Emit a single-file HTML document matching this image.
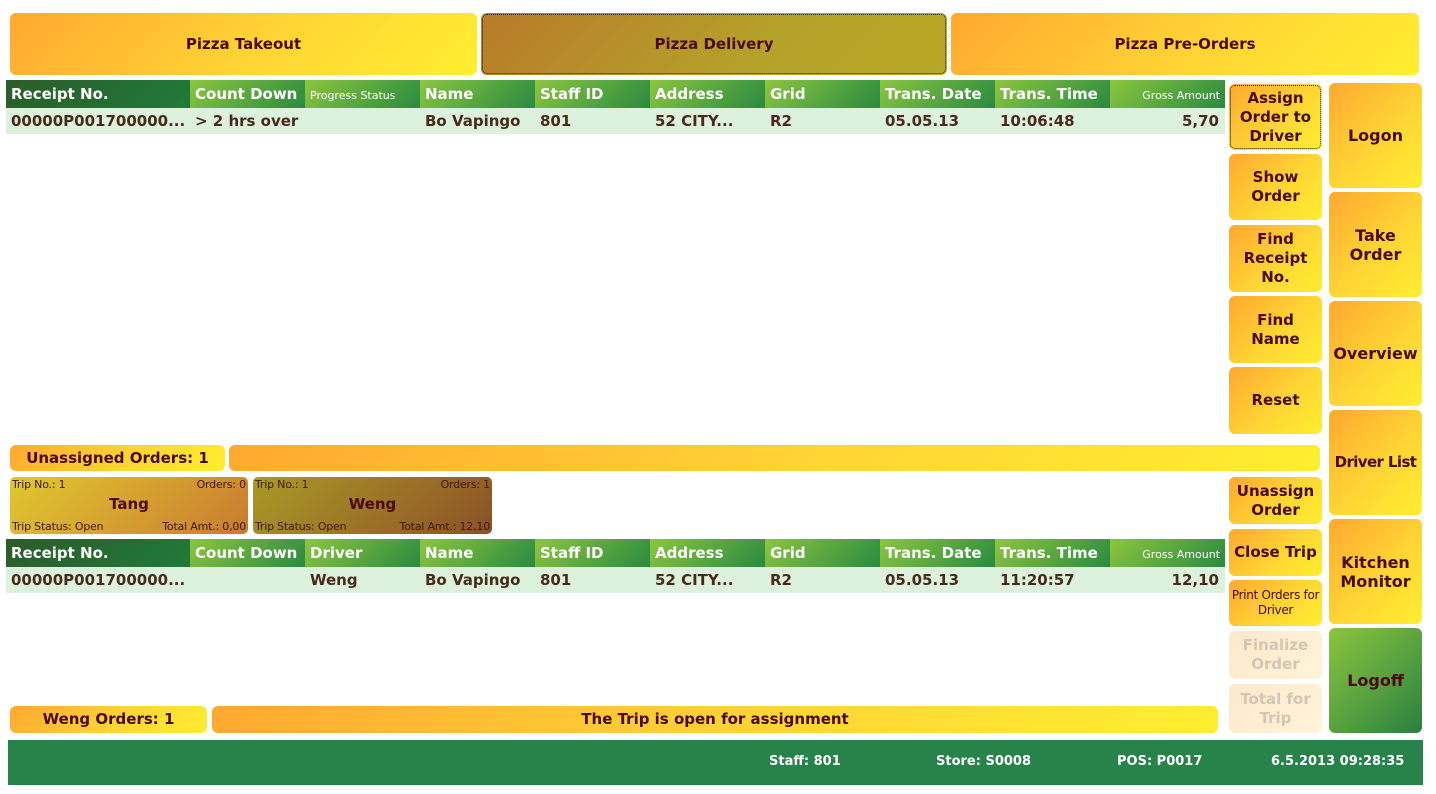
<!DOCTYPE html>
<html><head><meta charset="utf-8"><style>
*{margin:0;padding:0;box-sizing:border-box}
body{width:1436px;height:794px;background:#fff;position:relative;overflow:hidden;font-family:"DejaVu Sans","Liberation Sans",sans-serif;font-weight:bold;color:#4a0a00}
.a{position:absolute}
.o{position:absolute;border-radius:6px;background:linear-gradient(135deg,#ffa830,#ffd535 55%,#ffee30);display:flex;align-items:center;justify-content:center;text-align:center;font-size:15px;line-height:19px}
.dis{background:linear-gradient(135deg,#fde8cc,#fff4d8);color:#d4c6b4}
.h{position:absolute;height:28px;color:#fff;font-size:15px;line-height:28px;padding-left:5px;background:linear-gradient(135deg,#8cc63f,#2a8a40);white-space:nowrap;overflow:hidden}
.h.f{background:linear-gradient(135deg,#2d5c2a,#1f7a3a)}
.sm{font-weight:normal;font-size:11px}
.r{position:absolute;height:26px;background:#dcf2dc;font-size:15px;line-height:26px;color:#4a2a1a;white-space:nowrap}
.r span{position:absolute;top:0}
.card{position:absolute;border-radius:5px;font-size:11px;font-weight:normal;color:#3a1a00;letter-spacing:-0.2px}
.card div{position:absolute}
.ft{position:absolute;color:#fff;font-size:13px;top:754px}
</style></head><body>
<div class="o" style="left:10px;top:13px;width:467px;height:62px">Pizza Takeout</div>
<div class="o" style="left:481px;top:13px;width:466px;height:62px;background:linear-gradient(135deg,#b87a2a,#b5a22a 60%,#b8a825);outline:1px dotted #222;outline-offset:-2px">Pizza Delivery</div>
<div class="o" style="left:951px;top:13px;width:468px;height:62px">Pizza Pre-Orders</div>

<div class="h f" style="left:6px;top:80px;width:184px">Receipt No.</div>
<div class="h" style="left:190px;top:80px;width:115px">Count Down</div>
<div class="h" style="left:305px;top:80px;width:115px"><span class="sm">Progress Status</span></div>
<div class="h" style="left:420px;top:80px;width:115px">Name</div>
<div class="h" style="left:535px;top:80px;width:115px">Staff ID</div>
<div class="h" style="left:650px;top:80px;width:115px">Address</div>
<div class="h" style="left:765px;top:80px;width:115px">Grid</div>
<div class="h" style="left:880px;top:80px;width:115px">Trans. Date</div>
<div class="h" style="left:995px;top:80px;width:115px">Trans. Time</div>
<div class="h" style="left:1110px;top:80px;width:115px;text-align:right;padding-right:5px"><span class="sm">Gross Amount</span></div>
<div class="r" style="left:6px;top:108px;width:1219px">
<span style="left:5px">00000P001700000...</span><span style="left:189px">&gt; 2 hrs over</span><span style="left:419px">Bo Vapingo</span><span style="left:534px">801</span><span style="left:649px">52 CITY...</span><span style="left:764px">R2</span><span style="left:879px">05.05.13</span><span style="left:994px">10:06:48</span><span style="right:6px">5,70</span></div>

<div class="o" style="left:1229px;top:84px;width:93px;height:66px;outline:1px dotted #222;outline-offset:-2px">Assign Order to Driver</div>
<div class="o" style="left:1229px;top:154px;width:93px;height:66px">Show<br>Order</div>
<div class="o" style="left:1229px;top:225px;width:93px;height:67px">Find<br>Receipt<br>No.</div>
<div class="o" style="left:1229px;top:296px;width:93px;height:67px">Find<br>Name</div>
<div class="o" style="left:1229px;top:367px;width:93px;height:67px">Reset</div>
<div class="o" style="left:1229px;top:477px;width:93px;height:47px">Unassign Order</div>
<div class="o" style="left:1229px;top:529px;width:93px;height:47px">Close Trip</div>
<div class="o" style="left:1229px;top:580px;width:93px;height:46px;font-weight:normal;font-size:12px;line-height:15px;letter-spacing:-0.3px">Print Orders for Driver</div>
<div class="o dis" style="left:1229px;top:631px;width:93px;height:48px">Finalize Order</div>
<div class="o dis" style="left:1229px;top:684px;width:93px;height:49px">Total for Trip</div>

<div class="o" style="left:1329px;top:83px;width:93px;height:105px;font-size:16px">Logon</div>
<div class="o" style="left:1329px;top:192px;width:93px;height:105px;font-size:16px">Take<br>Order</div>
<div class="o" style="left:1329px;top:301px;width:93px;height:105px;font-size:16px">Overview</div>
<div class="o" style="left:1329px;top:410px;width:93px;height:105px;font-size:15px;letter-spacing:-0.6px;white-space:nowrap">Driver List</div>
<div class="o" style="left:1329px;top:519px;width:93px;height:105px;font-size:16px">Kitchen Monitor</div>
<div class="o" style="left:1329px;top:628px;width:93px;height:105px;font-size:16px;background:linear-gradient(135deg,#8cc63f,#2a8040)">Logoff</div>

<div class="o" style="left:10px;top:445px;width:215px;height:26px">Unassigned Orders: 1</div>
<div class="o" style="left:229px;top:445px;width:1091px;height:26px"></div>

<div class="card" style="left:10px;top:477px;width:238px;height:57px;background:linear-gradient(135deg,#e0c830,#d49a30 60%,#c87a30)">
<div style="left:2px;top:1px">Trip No.: 1</div><div style="right:2px;top:1px">Orders: 0</div>
<div style="left:0;right:0;top:18px;text-align:center;font-weight:bold;font-size:15px;color:#4a0a00;letter-spacing:0">Tang</div>
<div style="left:2px;bottom:1px">Trip Status: Open</div><div style="right:2px;bottom:1px">Total Amt.: 0,00</div></div>
<div class="card" style="left:253px;top:477px;width:239px;height:57px;background:linear-gradient(135deg,#a89a25,#9a6e28 60%,#8a5025)">
<div style="left:2px;top:1px">Trip No.: 1</div><div style="right:2px;top:1px">Orders: 1</div>
<div style="left:0;right:0;top:18px;text-align:center;font-weight:bold;font-size:15px;color:#4a0a00;letter-spacing:0">Weng</div>
<div style="left:2px;bottom:1px">Trip Status: Open</div><div style="right:2px;bottom:1px">Total Amt.: 12,10</div></div>

<div class="h f" style="left:6px;top:539px;width:184px">Receipt No.</div>
<div class="h" style="left:190px;top:539px;width:115px">Count Down</div>
<div class="h" style="left:305px;top:539px;width:115px">Driver</div>
<div class="h" style="left:420px;top:539px;width:115px">Name</div>
<div class="h" style="left:535px;top:539px;width:115px">Staff ID</div>
<div class="h" style="left:650px;top:539px;width:115px">Address</div>
<div class="h" style="left:765px;top:539px;width:115px">Grid</div>
<div class="h" style="left:880px;top:539px;width:115px">Trans. Date</div>
<div class="h" style="left:995px;top:539px;width:115px">Trans. Time</div>
<div class="h" style="left:1110px;top:539px;width:115px;text-align:right;padding-right:5px"><span class="sm">Gross Amount</span></div>
<div class="r" style="left:6px;top:567px;width:1219px">
<span style="left:5px">00000P001700000...</span><span style="left:304px">Weng</span><span style="left:419px">Bo Vapingo</span><span style="left:534px">801</span><span style="left:649px">52 CITY...</span><span style="left:764px">R2</span><span style="left:879px">05.05.13</span><span style="left:994px">11:20:57</span><span style="right:6px">12,10</span></div>

<div class="o" style="left:10px;top:706px;width:197px;height:27px">Weng Orders: 1</div>
<div class="o" style="left:212px;top:706px;width:1006px;height:27px">The Trip is open for assignment</div>

<div class="a" style="left:8px;top:740px;width:1415px;height:45px;background:#27834a"></div>
<div class="ft" style="left:769px">Staff: 801</div>
<div class="ft" style="left:936px">Store: S0008</div>
<div class="ft" style="left:1117px">POS: P0017</div>
<div class="ft" style="left:1271px">6.5.2013 09:28:35</div>
</body></html>
